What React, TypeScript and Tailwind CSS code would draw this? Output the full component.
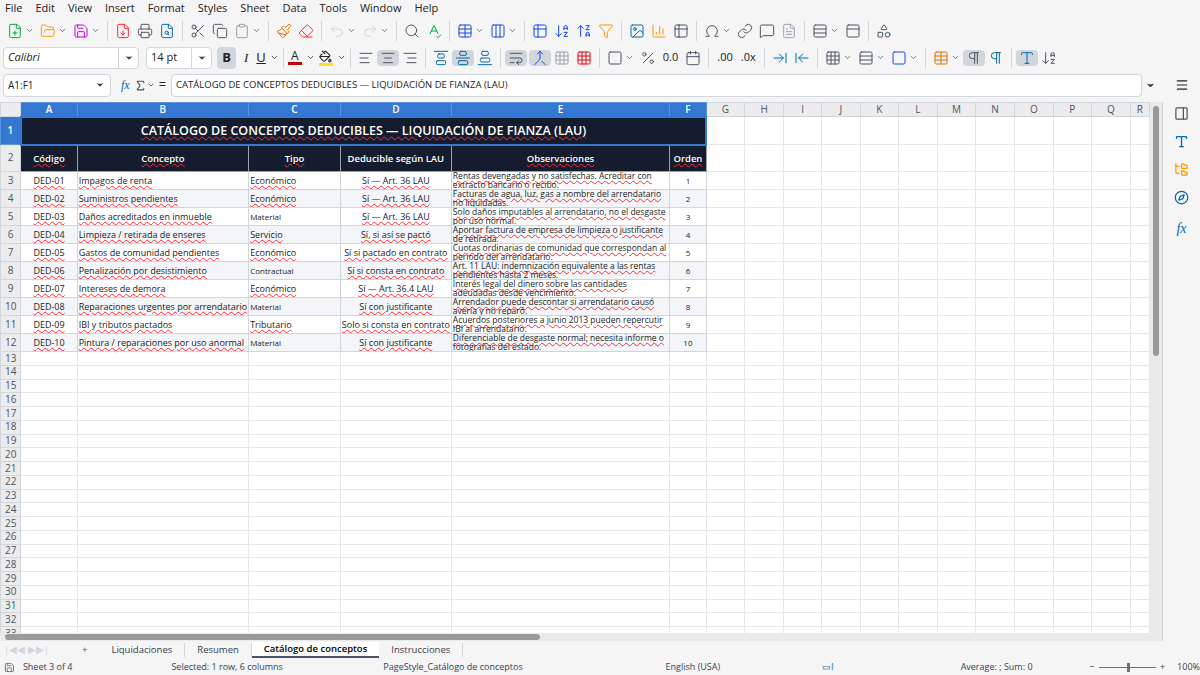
import React from "react";
import {
  FilePlus, FolderOpen, Save, FileDown, Printer, FileSearch, Scissors, Copy, Clipboard, Paintbrush, Eraser,
  Undo2, Redo2, Search, SpellCheck, Table, Columns3, ArrowDownAZ, ArrowUpZA, Filter, Image, BarChart3,
  Table2, Omega, Link, MessageSquare, FileText, Rows3, PanelTop, Shapes, ChevronDown, AlignLeft, AlignCenter,
  AlignRight, AlignVerticalJustifyStart, AlignVerticalJustifyCenter, AlignVerticalJustifyEnd, WrapText,
  Merge, Grid3x3, Percent, Calendar, ArrowRightToLine, ArrowLeftToLine, Square, PaintBucket, Pilcrow, Menu,
  PanelRight, Type, FolderTree, Compass, Sigma,
} from "lucide-react";

const cols = [
  { l: "A", w: 58 }, { l: "B", w: 153 }, { l: "C", w: 95 }, { l: "D", w: 95 }, { l: "E", w: 230 }, { l: "F", w: 37 },
  { l: "G", w: 41 }, { l: "H", w: 41 }, { l: "I", w: 41 }, { l: "J", w: 41 }, { l: "K", w: 41 }, { l: "L", w: 41 },
  { l: "M", w: 41 }, { l: "N", w: 41 }, { l: "O", w: 41 }, { l: "P", w: 41 }, { l: "Q", w: 41 }, { l: "R", w: 20 },
];

const data = [
  ["DED-01", "Impagos de renta", "Económico", "Sí — Art. 36 LAU", "Rentas devengadas y no satisfechas. Acreditar con extracto bancario o recibo.", "1"],
  ["DED-02", "Suministros pendientes", "Económico", "Sí — Art. 36 LAU", "Facturas de agua, luz, gas a nombre del arrendatario no liquidadas.", "2"],
  ["DED-03", "Daños acreditados en inmueble", "Material", "Sí — Art. 36 LAU", "Solo daños imputables al arrendatario, no el desgaste por uso normal.", "3"],
  ["DED-04", "Limpieza / retirada de enseres", "Servicio", "Sí, si así se pactó", "Aportar factura de empresa de limpieza o justificante de retirada.", "4"],
  ["DED-05", "Gastos de comunidad pendientes", "Económico", "Sí si pactado en contrato", "Cuotas ordinarias de comunidad que correspondan al periodo del arrendatario.", "5"],
  ["DED-06", "Penalización por desistimiento", "Contractual", "Sí si consta en contrato", "Art. 11 LAU: indemnización equivalente a las rentas pendientes hasta 2 meses.", "6"],
  ["DED-07", "Intereses de demora", "Económico", "Sí — Art. 36.4 LAU", "Interés legal del dinero sobre las cantidades adeudadas desde vencimiento.", "7"],
  ["DED-08", "Reparaciones urgentes por arrendatario", "Material", "Sí con justificante", "Arrendador puede descontar si arrendatario causó avería y no reparó.", "8"],
  ["DED-09", "IBI y tributos pactados", "Tributario", "Solo si consta en contrato", "Acuerdos posteriores a junio 2013 pueden repercutir IBI al arrendatario.", "9"],
  ["DED-10", "Pintura / reparaciones por uso anormal", "Material", "Sí con justificante", "Diferenciable de desgaste normal; necesita informe o fotografías del estado.", "10"],
];

const sq = "underline decoration-wavy decoration-red-500 decoration-1";

function Ic({ C, color = "text-gray-600", dd = false }: { C: any; color?: string; dd?: boolean }) {
  return (
    <div className="flex items-center gap-0.5 px-[3px]">
      <C size={16} strokeWidth={1.5} className={color} />
      {dd && <ChevronDown size={9} className="text-gray-600" />}
    </div>
  );
}

const Sep = () => <div className="mx-1 h-5 w-px bg-gray-300" />;

export default function App() {
  const font = { fontFamily: '"Open Sans", "Noto Sans", sans-serif' };
  const totalRows = 33;
  const rowH = (r: number) => (r === 1 ? 28 : r === 2 ? 27 : r <= 12 ? 18 : 13.75);
  return (
    <div className="flex h-[675px] w-[1200px] flex-col overflow-hidden bg-[#f5f5f5] text-[#222]" style={font}>
      {/* menu */}
      <div className="flex h-[17px] items-center gap-[13px] px-[5px] text-[11px]">
        {["File", "Edit", "View", "Insert", "Format", "Styles", "Sheet", "Data", "Tools", "Window", "Help"].map((m) => (
          <span key={m}>{m}</span>
        ))}
      </div>
      {/* toolbar 1 */}
      <div className="flex h-[27px] items-center px-[4px]">
        <Ic C={FilePlus} color="text-green-600" dd />
        <Ic C={FolderOpen} color="text-amber-500" dd />
        <Ic C={Save} color="text-fuchsia-600" dd />
        <Sep />
        <Ic C={FileDown} color="text-red-500" />
        <Ic C={Printer} />
        <Ic C={FileSearch} color="text-sky-700" />
        <Sep />
        <Ic C={Scissors} />
        <Ic C={Copy} />
        <Ic C={Clipboard} color="text-gray-400" dd />
        <Sep />
        <Ic C={Paintbrush} color="text-amber-600" />
        <Ic C={Eraser} color="text-red-500" />
        <Sep />
        <Ic C={Undo2} color="text-gray-300" dd />
        <Ic C={Redo2} color="text-gray-300" dd />
        <Sep />
        <Ic C={Search} />
        <Ic C={SpellCheck} color="text-green-600" />
        <Sep />
        <Ic C={Table} color="text-blue-700" dd />
        <Ic C={Columns3} color="text-blue-700" dd />
        <Sep />
        <Ic C={Table2} color="text-blue-700" />
        <Ic C={ArrowDownAZ} color="text-blue-700" />
        <Ic C={ArrowUpZA} color="text-blue-700" />
        <Ic C={Filter} color="text-amber-500" />
        <Sep />
        <Ic C={Image} color="text-sky-700" />
        <Ic C={BarChart3} color="text-amber-500" />
        <Ic C={Table2} />
        <Sep />
        <Ic C={Omega} dd />
        <Ic C={Link} />
        <Ic C={MessageSquare} />
        <Ic C={FileText} color="text-gray-400" />
        <Sep />
        <Ic C={Rows3} dd />
        <Ic C={PanelTop} />
        <Sep />
        <Ic C={Shapes} />
      </div>
      {/* toolbar 2 */}
      <div className="flex h-[27px] items-center px-[3px]">
        <div className="flex h-[22px] w-[136px] items-center justify-between rounded-sm border border-gray-300 bg-white pl-1 text-[11px] italic">
          Calibri
          <div className="flex h-full w-5 items-center justify-center border-l border-gray-300">
            <ChevronDown size={10} className="fill-gray-700" />
          </div>
        </div>
        <div className="ml-[7px] flex h-[22px] w-[66px] items-center justify-between rounded-sm border border-gray-300 bg-white pl-1 text-[11px]">
          14 pt
          <div className="flex h-full w-5 items-center justify-center border-l border-gray-300">
            <ChevronDown size={10} className="fill-gray-700" />
          </div>
        </div>
        <div className="ml-[5px] flex h-[22px] w-[19px] items-center justify-center rounded-sm bg-gray-300 text-[13px] font-bold">B</div>
        <span className="mx-[8px] text-[13px] italic" style={{ fontFamily: "serif" }}>I</span>
        <span className="text-[13px] underline">U</span>
        <ChevronDown size={9} className="ml-1" />
        <Sep />
        <div className="flex flex-col items-center text-[12px] leading-[12px]">A<div className="h-[3px] w-[14px] bg-red-700" /></div>
        <ChevronDown size={9} className="ml-1" />
        <div className="ml-1 flex flex-col items-center"><PaintBucket size={13} /><div className="h-[3px] w-[14px] bg-yellow-300" /></div>
        <ChevronDown size={9} className="ml-1" />
        <Sep />
        <Ic C={AlignLeft} />
        <div className="rounded-sm bg-gray-300"><Ic C={AlignCenter} /></div>
        <Ic C={AlignRight} />
        <Sep />
        <Ic C={AlignVerticalJustifyStart} color="text-sky-700" />
        <div className="rounded-sm bg-gray-300"><Ic C={AlignVerticalJustifyCenter} color="text-sky-700" /></div>
        <Ic C={AlignVerticalJustifyEnd} color="text-sky-700" />
        <Sep />
        <div className="rounded-sm bg-gray-300"><Ic C={WrapText} /></div>
        <div className="ml-0.5 rounded-sm bg-gray-300"><Ic C={Merge} color="text-blue-700" /></div>
        <Ic C={Grid3x3} color="text-gray-400" />
        <Ic C={Grid3x3} color="text-red-600" />
        <Sep />
        <Ic C={Square} dd />
        <Ic C={Percent} />
        <span className="px-1 text-[11px]">0.0</span>
        <Ic C={Calendar} />
        <Sep />
        <span className="px-1 text-[11px]">.00</span>
        <span className="px-1 text-[11px]">.0x</span>
        <Sep />
        <Ic C={ArrowRightToLine} color="text-sky-700" />
        <Ic C={ArrowLeftToLine} color="text-sky-700" />
        <Sep />
        <Ic C={Grid3x3} dd />
        <Ic C={Rows3} dd />
        <Ic C={Square} color="text-blue-700" dd />
        <Sep />
        <Ic C={Table} color="text-amber-600" dd />
        <div className="rounded-sm bg-gray-300"><Ic C={Pilcrow} /></div>
        <Ic C={Pilcrow} color="text-sky-700" />
        <Sep />
        <div className="rounded-sm bg-gray-300"><Ic C={Type} color="text-sky-700" /></div>
        <Ic C={ArrowDownAZ} />
      </div>
      {/* formula bar */}
      <div className="flex h-[28px] items-center px-[3px]">
        <div className="flex h-[23px] w-[108px] items-center justify-between rounded-sm border border-gray-300 bg-white pl-1 text-[10px]">
          A1:F1
          <div className="flex h-full w-5 items-center justify-center">
            <ChevronDown size={10} className="fill-gray-700" />
          </div>
        </div>
        <span className="ml-[10px] text-[12px] italic text-sky-700" style={{ fontFamily: "serif" }}>fx</span>
        <Sigma size={13} className="ml-1 text-gray-600" />
        <ChevronDown size={8} />
        <span className="ml-1 text-[13px]">=</span>
        <div className="ml-[5px] flex h-[23px] flex-1 items-center rounded-sm border border-gray-300 bg-white px-1 text-[9.5px]">
          CATÁLOGO DE CONCEPTOS DEDUCIBLES — LIQUIDACIÓN DE FIANZA (LAU)
        </div>
        <ChevronDown size={11} className="mx-[3px] fill-gray-700" />
        <div className="ml-[8px] flex w-[30px] justify-center"><Menu size={14} /></div>
      </div>
      {/* main area */}
      <div className="mt-[3px] flex flex-1 overflow-hidden">
        <div className="flex flex-1 flex-col overflow-hidden bg-white">
          <div className="flex flex-1 overflow-hidden">
            <div className="flex-1 overflow-hidden">
              <table className="border-collapse text-[9px] leading-[9.5px]" style={{ tableLayout: "fixed", fontFamily: '"Open Sans", sans-serif' }}>
                <colgroup>
                  <col style={{ width: 21 }} />
                  {cols.map((c) => <col key={c.l} style={{ width: c.w }} />)}
                </colgroup>
                <tbody>
                  <tr className="h-[14px]">
                    <td className="border border-gray-300 bg-[#ececec]" />
                    {cols.map((c, i) => (
                      <td key={c.l} className={`border text-center text-[10px] ${i < 6 ? "border-[#5a95d8] bg-[#3478d4] font-semibold text-white" : "border-gray-300 bg-[#ececec] text-gray-600"}`}>{c.l}</td>
                    ))}
                  </tr>
                  {Array.from({ length: totalRows }, (_, k) => k + 1).map((r) => (
                    <tr key={r} style={{ height: rowH(r) }}>
                      <td className={`border text-center text-[10px] ${r === 1 ? "border-[#5a95d8] bg-[#3478d4] font-semibold text-white" : "border-gray-300 bg-[#ececec] text-gray-600"}`}>{r}</td>
                      {r === 1 ? (
                        <>
                          <td colSpan={6} className="border-2 border-[#3478d4] bg-[#141c2e] text-center text-[12.5px] font-semibold text-white"><span className={sq}>CATÁLOGO DE CONCEPTOS DEDUCIBLES — LIQUIDACIÓN DE FIANZA (LAU)</span></td>
                          {cols.slice(6).map((c) => <td key={c.l} className="border border-gray-200" />)}
                        </>
                      ) : r === 2 ? (
                        <>
                          {["Código", "Concepto", "Tipo", "Deducible según LAU", "Observaciones", "Orden"].map((h) => (
                            <td key={h} className="border border-gray-400 bg-[#141c2e] text-center text-[9.5px] font-semibold text-white"><span className={h === "Deducible según LAU" ? "" : sq}>{h}</span></td>
                          ))}
                          {cols.slice(6).map((c) => <td key={c.l} className="border border-gray-200" />)}
                        </>
                      ) : r <= 12 ? (
                        <>
                          {data[r - 3].map((v, i) => (
                            <td key={i} className={`overflow-hidden whitespace-nowrap border border-gray-300 px-[1px] ${r % 2 === 0 ? "bg-[#f3f5f8]" : "bg-white"} ${i === 0 || i === 3 || i === 5 ? "text-center" : ""} ${i === 5 ? "text-[8px]" : ""} ${i === 2 && (v === "Material" || v === "Contractual") ? "text-[8px]" : ""}`}>
                              {i === 4 ? (
                                <div className="whitespace-normal text-[8.5px] leading-[8.5px]"><span className={sq}>{v}</span></div>
                              ) : (
                                <span className={i === 5 || v === "Material" || v === "Contractual" ? "" : sq}>{v}</span>
                              )}
                            </td>
                          ))}
                          {cols.slice(6).map((c) => <td key={c.l} className="border border-gray-200" />)}
                        </>
                      ) : (
                        cols.map((c) => <td key={c.l} className="border border-gray-200" />)
                      )}
                    </tr>
                  ))}
                </tbody>
              </table>
            </div>
            {/* vertical scrollbar */}
            <div className="flex w-[12px] justify-center bg-[#eaeaea] pt-1">
              <div className="h-[250px] w-[6px] rounded bg-[#9a9a9a]" />
            </div>
          </div>
          {/* horizontal scrollbar */}
          <div className="flex h-[8px] items-center bg-[#eaeaea] pl-[5px]">
            <div className="h-[6px] w-[535px] rounded bg-[#9a9a9a]" />
          </div>
        </div>
        {/* sidebar */}
        <div className="flex w-[38px] flex-col items-center gap-[13px] border-l border-gray-300 pt-[4px]">
          <PanelRight size={15} className="text-gray-600" />
          <Type size={15} className="text-sky-700" />
          <FolderTree size={15} className="text-amber-500" />
          <Compass size={15} className="text-sky-700" />
          <span className="text-[14px] italic text-sky-700" style={{ fontFamily: "serif" }}>fx</span>
        </div>
      </div>
      {/* tabs */}
      <div className="flex h-[18px] items-center text-[9.5px] text-gray-700">
        <div className="w-[70px] pl-1 text-gray-300">|◀◀ ▶▶|</div>
        <span className="px-3 text-sky-700">+</span>
        <span className="border-r border-gray-300 px-3">Liquidaciones</span>
        <span className="border-r border-gray-300 px-3">Resumen</span>
        <span className="border-b-2 border-gray-600 bg-white px-3 font-semibold text-black">Catálogo de conceptos</span>
        <span className="border-r border-gray-300 px-3">Instrucciones</span>
      </div>
      {/* status */}
      <div className="flex h-[16px] items-center text-[9px] text-gray-700">
        <Save size={11} className="ml-1 text-gray-500" />
        <span className="ml-2 w-[150px]">Sheet 3 of 4</span>
        <span className="w-[214px]">Selected: 1 row, 6 columns</span>
        <span className="w-[285px]">PageStyle_Catálogo de conceptos</span>
        <span className="w-[158px]">English (USA)</span>
        <span className="w-[140px] text-sky-700">▭I</span>
        <span className="w-[130px]">Average: ; Sum: 0</span>
        <span>−</span>
        <div className="relative mx-1 h-px w-[58px] bg-gray-500"><div className="absolute left-[28px] top-[-4px] h-[9px] w-[3px] bg-gray-500" /></div>
        <span>+</span>
        <span className="ml-3">100%</span>
      </div>
    </div>
  );
}
